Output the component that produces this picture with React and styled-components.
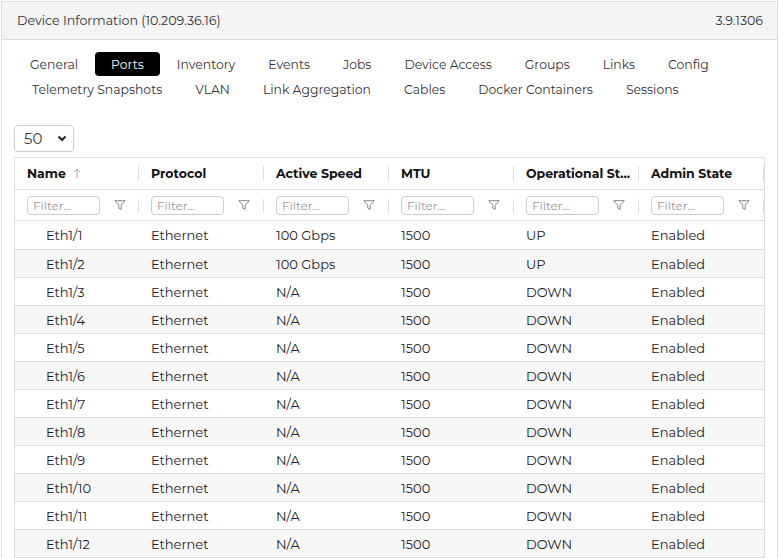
import React from 'react'
import styled, { createGlobalStyle } from 'styled-components'

const Global = createGlobalStyle`
  html, body {
    margin: 0;
    padding: 0;
    background: #fff;
    overflow: hidden;
  }
  body {
    font-family: 'Montserrat', 'Noto Sans', 'DejaVu Sans', sans-serif;
    color: #222;
  }
  * { box-sizing: border-box; }
`

const Card = styled.div`
  & {
    margin: 1px 1px 0 1px;
    border: 1px solid #ddd;
    border-bottom: none;
    height: 600px;
    background: #fff;
  }
`

const Header = styled.div`
  & {
    height: 38px;
    background: #f4f4f4;
    border-bottom: 1px solid #ddd;
    display: flex;
    align-items: center;
    justify-content: space-between;
    padding: 0 14px 0 15px;
    font-size: 12.6px;
    color: #333;
  }
`

const Body = styled.div`
  & {
    padding: 12px 13px 0 12px;
  }
`

const Tabs = styled.div`
  & {
    display: flex;
    flex-direction: column;
    gap: 1px;
  }
`

const TabRow = styled.div`
  & {
    display: flex;
    gap: 1px;
    padding-left: ${({ shift }) => shift || 0}px;
  }
`

const Tab = styled.div`
  & {
    height: 24px;
    padding: 0 16px;
    border-radius: 4px;
    display: flex;
    align-items: center;
    font-size: 12.4px;
    color: ${({ active }) => (active ? '#fff' : '#333')};
    background: ${({ active }) => (active ? '#000' : 'transparent')};
    white-space: nowrap;
  }
`

const SelectBox = styled.div`
  & {
    margin-top: 24px;
    width: 60px;
    height: 27px;
    border: 1px solid #ccc;
    border-radius: 4px;
    display: flex;
    align-items: center;
    justify-content: space-between;
    padding: 0 6px 0 9px;
    font-size: 15px;
    color: #333;
  }
`

const Table = styled.div`
  & {
    margin-top: 5px;
    width: 751px;
    border: 1px solid #ddd;
    border-bottom: none;
    overflow: hidden;
  }
`

const Row = styled.div`
  & {
    display: grid;
    grid-template-columns: 124px repeat(5, 125px) 40px;
    height: ${({ h }) => h}px;
    border-bottom: 1px solid #ddd;
    background: ${({ alt }) => (alt ? '#f7f7f7' : '#fff')};
  }
`

const HeadCell = styled.div`
  & {
    position: relative;
    display: flex;
    align-items: center;
    padding-left: 12px;
    font-size: 12.5px;
    font-weight: 700;
    color: #111;
    white-space: nowrap;
    overflow: hidden;
  }
  &::after {
    content: '';
    position: absolute;
    right: 0;
    top: 8px;
    bottom: 8px;
    width: 1px;
    background: #ddd;
  }
`

const SortArrow = styled.svg`
  & {
    margin-left: 7px;
    margin-top: -1px;
  }
`

const FilterCell = styled.div`
  & {
    position: relative;
    display: flex;
    align-items: center;
    padding-left: 12px;
    gap: 14px;
  }
  &::after {
    content: '';
    position: absolute;
    right: 0;
    top: 9px;
    bottom: 7px;
    width: 1px;
    background: #ddd;
  }
`

const FilterInput = styled.div`
  & {
    width: 73px;
    height: 19px;
    border: 1px solid #ccc;
    border-radius: 4px;
    font-size: 12px;
    color: #999;
    padding-left: 5px;
    display: flex;
    align-items: center;
  }
`

const Cell = styled.div`
  & {
    display: flex;
    align-items: center;
    padding-left: ${({ indent }) => (indent ? 31 : 12)}px;
    font-size: 13px;
    color: #222;
    white-space: nowrap;
  }
`

const Funnel = () => (
  <svg width="12" height="10" viewBox="0 0 12 10" fill="none">
    <path
      d="M0.7 0.7 H11.3 L7.2 5.2 V9.3 L4.8 8.2 V5.2 Z"
      stroke="#888"
      strokeWidth="1"
      strokeLinejoin="round"
    />
  </svg>
)

const Chevron = () => (
  <svg width="10" height="7" viewBox="0 0 10 7" fill="none">
    <path d="M1.5 1.5 L5 5 L8.5 1.5" stroke="#222" strokeWidth="2" />
  </svg>
)

const tabRows = [
  ['General', 'Ports', 'Inventory', 'Events', 'Jobs', 'Device Access', 'Groups', 'Links', 'Config'],
  ['Telemetry Snapshots', 'VLAN', 'Link Aggregation', 'Cables', 'Docker Containers', 'Sessions'],
]

const columns = ['Name', 'Protocol', 'Active Speed', 'MTU', 'Operational St...', 'Admin State', '']

const ports = Array.from({ length: 12 }, (_, i) => ({
  name: `Eth1/${i + 1}`,
  protocol: 'Ethernet',
  speed: i < 2 ? '100 Gbps' : 'N/A',
  mtu: '1500',
  oper: i < 2 ? 'UP' : 'DOWN',
  admin: 'Enabled',
}))

export default () => (
  <>
    <Global />
    <Card>
      <Header>
        <span>Device Information (10.209.36.16)</span>
        <span>3.9.1306</span>
      </Header>
      <Body>
        <Tabs>
          {tabRows.map((row, r) => (
            <TabRow key={r} shift={r * 2}>
              {row.map((t) => (
                <Tab key={t} active={t === 'Ports'}>
                  {t}
                </Tab>
              ))}
            </TabRow>
          ))}
        </Tabs>
        <SelectBox>
          <span>50</span>
          <Chevron />
        </SelectBox>
        <Table>
          <Row h={32}>
            {columns.map((c, i) => (
              <HeadCell key={i}>
                {c}
                {i === 0 && (
                  <SortArrow width="8" height="11" viewBox="0 0 8 11" fill="none">
                    <path d="M4 10.5 V1 M1 4 L4 1 L7 4" stroke="#aaa" strokeWidth="1" />
                  </SortArrow>
                )}
              </HeadCell>
            ))}
          </Row>
          <Row h={31}>
            {columns.map((c, i) => (
              <FilterCell key={i}>
                {c && (
                  <>
                    <FilterInput>Filter...</FilterInput>
                    <Funnel />
                  </>
                )}
              </FilterCell>
            ))}
          </Row>
          {ports.map((p, i) => (
            <Row key={p.name} h={i === 0 ? 29 : 28} alt={i % 2 === 1}>
              <Cell indent>{p.name}</Cell>
              <Cell>{p.protocol}</Cell>
              <Cell>{p.speed}</Cell>
              <Cell>{p.mtu}</Cell>
              <Cell>{p.oper}</Cell>
              <Cell>{p.admin}</Cell>
              <Cell />
            </Row>
          ))}
        </Table>
      </Body>
    </Card>
  </>
)
